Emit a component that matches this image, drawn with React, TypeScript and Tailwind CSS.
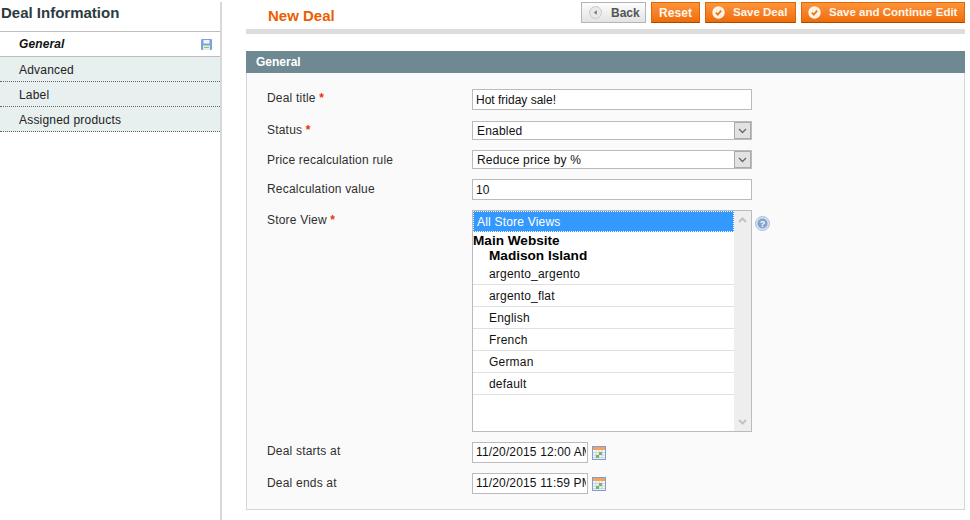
const Star = () => <span className="text-[#eb340a] font-bold"> *</span>;

function Chevron({ up = false, color = "#666", sw = 1.3 }: { up?: boolean; color?: string; sw?: number }) {
  return (
    <svg width="9" height="6" viewBox="0 0 9 6" className={up ? "rotate-180" : ""}>
      <path d="M1 1l3.5 3.5L8 1" fill="none" stroke={color} strokeWidth={sw} />
    </svg>
  );
}

function Row({ label, req, children, cls, labelCls }: { label: string; req?: boolean; children: React.ReactNode; cls: string; labelCls: string }) {
  return (
    <div className={`flex items-start ${cls}`}>
      <div className={`w-[205px] text-[12px] leading-[14px] tracking-[0.2px] text-[#2f2f2f] ${labelCls}`}>
        {label}
        {req && <Star />}
      </div>
      {children}
    </div>
  );
}

function TextBox({ value, cls }: { value: string; cls: string }) {
  return (
    <input
      readOnly
      value={value}
      className={`border border-[#bbb] bg-white text-[12px] text-[#111] outline-none ${cls}`}
    />
  );
}

function SelectBox({ value }: { value: string }) {
  return (
    <div className="flex h-[19px] w-[280px] items-center justify-between border border-[#bbb] bg-white pl-[4px] text-[12px] tracking-[0.2px] text-[#111]">
      <span>{value}</span>
      <span className="flex h-[17px] w-[17px] items-center justify-center border border-[#aaa] bg-[#e2e2e2]">
        <Chevron />
      </span>
    </div>
  );
}

function Calendar() {
  return (
    <svg width="14" height="14" viewBox="0 0 14 14" className="ml-[4px] mt-[4px]">
      <rect x="0.5" y="0.5" width="13" height="13" fill="#f4f7fb" stroke="#7a9fd0" />
      <rect x="1" y="1" width="12" height="3" fill="#f7a25c" />
      <path d="M1 6.5h12M1 9h12M1 11.5h12M4 4v9M7 4v9M10 4v9" stroke="#c9d5e2" />
      <rect x="4" y="9" width="3" height="3" fill="#7cb45e" />
      <rect x="7" y="6" width="3" height="3" fill="#7cb45e" />
    </svg>
  );
}

function Check() {
  return (
    <svg width="13" height="13" viewBox="0 0 13 13" className="ml-[6px] shrink-0">
      <circle cx="6.5" cy="6.5" r="6.2" fill="#fdf3e6" />
      <path d="M3.8 6.6l2 2 3.4-4" fill="none" stroke="#ec7a10" strokeWidth="1.8" />
    </svg>
  );
}

function OrangeButton({ label, icon, cls }: { label: string; icon?: boolean; cls: string }) {
  return (
    <div
      className={`flex h-[21px] items-center border border-[#e0660c] border-b-[#a84a05] bg-gradient-to-b from-[#fd9438] to-[#ef6c05] font-bold text-[#fff6ea] ${
        icon ? "justify-start" : "justify-center"
      } ${cls}`}
    >
      {icon && <Check />}
      <span className={icon ? "ml-[8px]" : ""}>{label}</span>
    </div>
  );
}

const stores = ["argento_argento", "argento_flat", "English", "French", "German", "default"];

export default function App() {
  return (
    <div
      className="flex h-[520px] w-[970px] overflow-hidden bg-white text-[#2f2f2f]"
      style={{ fontFamily: '"Liberation Sans", Arial, sans-serif' }}
    >
      <aside className="mt-[2px] w-[222px] shrink-0 border-r-[2px] border-[#d8d8d8]">
        <h3 className="h-[29px] pl-[1px] text-[15px] font-bold leading-[21px] text-[#2d3a42]">Deal Information</h3>
        <div className="h-px bg-[#bdbdbd]" />
        <div className="flex h-[24px] items-center justify-between pl-[19px] pr-[8px] text-[12px] font-bold italic tracking-[0.1px] text-[#111]">
          <span>General</span>
          <svg width="11" height="11" viewBox="0 0 11 11">
            <rect width="11" height="11" rx="1" fill="#78a3dc" />
            <rect x="2.5" y="1" width="6" height="3.5" fill="#f2f6fb" />
            <rect x="2" y="6.5" width="7" height="4.5" fill="#e6eedb" />
            <rect x="3" y="8" width="5" height="1" fill="#9bbd68" />
          </svg>
        </div>
        <div className="border-t border-[#bdbdbd] bg-[#e7efef]">
          {["Advanced", "Label", "Assigned products"].map((t) => (
            <div key={t} className="flex h-[25px] items-center border-b border-dotted border-[#666] pl-[19px] pt-[2px] text-[12px] tracking-[0.2px] text-[#222]">
              {t}
            </div>
          ))}
        </div>
      </aside>

      <main className="ml-[24px] w-[719px] shrink-0">
        <div className="flex h-[34px] items-start justify-between border-b-[5px] border-[#dddddd] pt-[2px]">
          <h3 className="pl-[22px] pt-[6px] text-[15px] font-bold leading-[16px] text-[#eb5e00]">New Deal</h3>
          <div className="flex gap-[5px]">
            <div className="flex h-[21px] w-[65px] items-center border border-[#b5b5b5] bg-gradient-to-b from-[#fdfdfd] to-[#e3e3e3] pl-[7px] text-[12px] font-bold text-[#555]">
              <svg width="13" height="13" viewBox="0 0 13 13">
                <circle cx="6.5" cy="6.5" r="6" fill="#e8e8e8" stroke="#c9c9c9" />
                <path d="M7.8 4.3v4.4L4.8 6.5z" fill="#777" />
              </svg>
              <span className="ml-[9px]">Back</span>
            </div>
            <OrangeButton label="Reset" cls="w-[49px] text-[12px] tracking-[0.1px]" />
            <OrangeButton label="Save Deal" icon cls="w-[91px] text-[11.5px]" />
            <OrangeButton label="Save and Continue Edit" icon cls="w-[164px] text-[11.5px]" />
          </div>
        </div>

        <div className="mt-[17px] flex h-[22px] items-center bg-[#6f8992] pl-[10px] text-[12px] font-bold text-white">General</div>
        <div className="h-[437px] border border-t-0 border-[#d6d6d6] bg-[#fafafa] pl-[20px] pt-[16px]">
          <Row label="Deal title" req cls="" labelCls="pt-[2px]">
            <TextBox value="Hot friday sale!" cls="h-[21px] w-[280px] px-[3px]" />
          </Row>
          <Row label="Status" req cls="mt-[11px]" labelCls="pt-[2px]">
            <SelectBox value="Enabled" />
          </Row>
          <Row label="Price recalculation rule" cls="mt-[10px]" labelCls="pt-[3px]">
            <SelectBox value="Reduce price by %" />
          </Row>
          <Row label="Recalculation value" cls="mt-[10px]" labelCls="pt-[3px]">
            <TextBox value="10" cls="h-[21px] w-[280px] px-[3px]" />
          </Row>
          <Row label="Store View" req cls="mt-[10px]" labelCls="pt-[3px]">
            <div className="flex">
              <div className="flex h-[222px] w-[280px] justify-between border border-[#bbb] bg-white text-[12px] tracking-[0.2px] text-[#111]">
                <div className="w-[261px]">
                  <div className="h-[21px] border border-dotted border-white bg-[#3399ff] pl-[3px] leading-[21px] text-white">All Store Views</div>
                  <div className="mt-[1px] h-[15px] text-[13.6px] font-bold leading-[15px] tracking-normal text-black">Main Website</div>
                  <div className="h-[15px] pl-[16px] text-[13.6px] font-bold leading-[15px] tracking-normal text-black">Madison Island</div>
                  {stores.map((s) => (
                    <div key={s} className="flex h-[22px] items-center border-b border-[#e0e0e0] pl-[16px]">{s}</div>
                  ))}
                </div>
                <div className="flex w-[17px] flex-col items-center justify-between bg-[#eeeeee] py-[6px]">
                  <Chevron up color="#c2c2c2" sw={2} />
                  <Chevron color="#c2c2c2" sw={2} />
                </div>
              </div>
              <svg width="15" height="15" viewBox="0 0 15 15" className="ml-[3px] mt-[6px]">
                <circle cx="7.5" cy="7.5" r="7" fill="#d5e2f2" stroke="#a5bfdf" />
                <circle cx="7.5" cy="7.5" r="5" fill="#84a2cb" />
                <text x="7.5" y="11" textAnchor="middle" fontSize="9" fontWeight="700" fill="#fff" fontFamily="Liberation Sans">?</text>
              </svg>
            </div>
          </Row>
          <Row label="Deal starts at" cls="mt-[10px]" labelCls="pt-[2px]">
            <div className="flex">
              <TextBox value="11/20/2015 12:00 AM" cls="h-[21px] w-[116px] pb-px pl-[3px] pr-[1px] tracking-[0.15px]" />
              <Calendar />
            </div>
          </Row>
          <Row label="Deal ends at" cls="mt-[10px]" labelCls="pt-[3px]">
            <div className="flex">
              <TextBox value="11/20/2015 11:59 PM" cls="h-[21px] w-[116px] pb-px pl-[3px] pr-[1px] tracking-[0.15px]" />
              <Calendar />
            </div>
          </Row>
        </div>
      </main>
    </div>
  );
}
